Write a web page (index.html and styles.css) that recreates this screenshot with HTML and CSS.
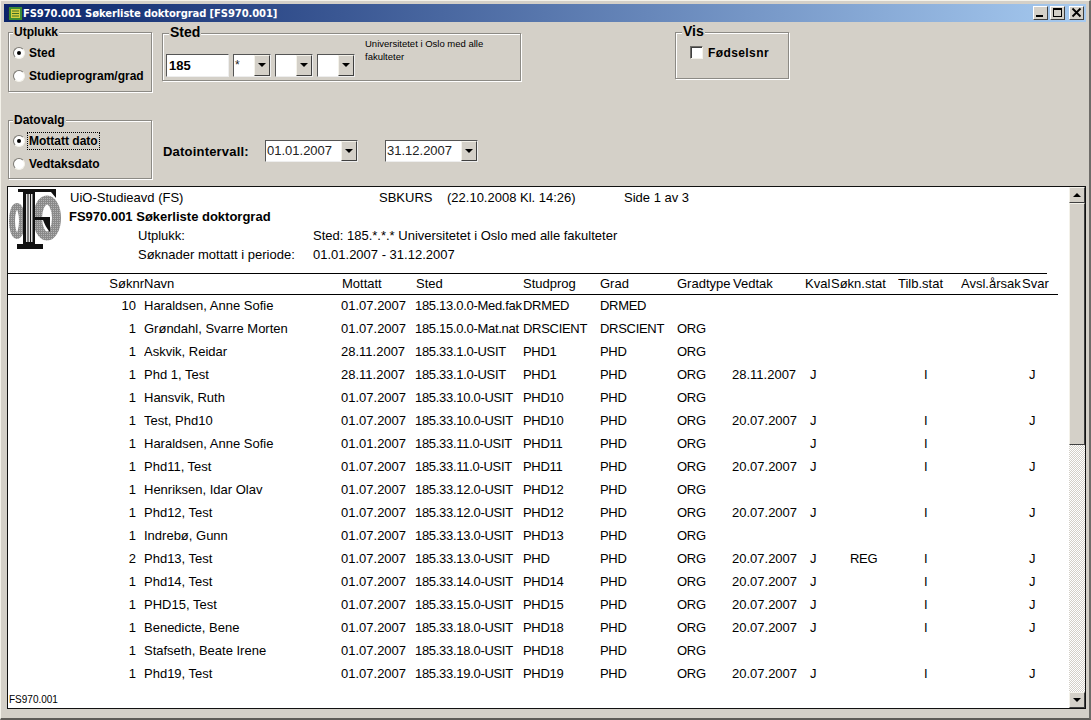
FILE: index.html
```html
<!DOCTYPE html>
<html lang="no">
<head>
  <meta charset="UTF-8" />
  <title>FS970.001 Søkerliste doktorgrad</title>
  <link rel="stylesheet" href="styles.css">
</head>
<body>
<div class="window">

  <!-- Title bar -->
  <div class="titlebar">
    <svg class="app-icon" width="15" height="15" viewBox="0 0 15 15">
      <rect x="1" y="1" width="13" height="13" fill="#3c8a34"/>
      <rect x="3" y="3" width="9" height="9" fill="#d6d03e"/>
      <path d="M4 5h7M4 7.500h7M4 10h7" stroke="#3f6e28" stroke-width="1"/>
      <path d="M0 3h1M0 6h1M0 9h1M0 12h1M14 3h1M14 6h1M14 9h1M14 12h1" stroke="#333"/>
    </svg>
    <span class="title-text">FS970.001 Søkerliste doktorgrad [FS970.001]</span>
    <div class="caption-buttons">
      <div class="cap-btn"><svg width="15" height="13" viewBox="0 0 15 13"><rect x="3" y="9" width="7" height="2" fill="#000"/></svg></div>
      <div class="cap-btn"><svg width="15" height="13" viewBox="0 0 15 13"><path d="M3 2h9v9H3z M4 4h7v6H4z" fill="#000" fill-rule="evenodd"/></svg></div>
      <div class="cap-btn cap-close"><svg width="15" height="13" viewBox="0 0 15 13"><path d="M3.500 2.500l8 8M11.500 2.500l-8 8" stroke="#000" stroke-width="1.800"/></svg></div>
    </div>
  </div>

  <!-- Selection form -->
  <div class="form">
    <div class="form-row form-row-top">
      <div class="group group-utplukk">
        <span class="group-title">Utplukk</span>
        <div class="option"><span class="radio checked"></span><span>Sted</span></div>
        <div class="option"><span class="radio"></span><span>Studieprogram/grad</span></div>
      </div>
      <div class="group group-sted">
        <span class="group-title title-big">Sted</span>
        <div class="sted-code">185</div>
        <div class="combo combo-small"><span class="combo-value">*</span><span class="combo-btn"></span></div>
        <div class="combo combo-small"><span class="combo-value"></span><span class="combo-btn"></span></div>
        <div class="combo combo-small"><span class="combo-value"></span><span class="combo-btn"></span></div>
        <div class="sted-name">Universitetet i Oslo med alle fakulteter</div>
      </div>
      <div class="group group-vis">
        <span class="group-title title-big">Vis</span>
        <div class="option"><span class="checkbox"></span><span class="wide">Fødselsnr</span></div>
      </div>
    </div>
    <div class="form-row form-row-bottom">
      <div class="group group-dato">
        <span class="group-title">Datovalg</span>
        <div class="option"><span class="radio checked"></span><span class="focused">Mottatt dato</span></div>
        <div class="option"><span class="radio"></span><span>Vedtaksdato</span></div>
      </div>
      <div class="date-range">
        <span class="date-label">Datointervall:</span>
        <div class="combo combo-date"><span class="combo-value">01.01.2007</span><span class="combo-btn"></span></div>
        <div class="combo combo-date"><span class="combo-value">31.12.2007</span><span class="combo-btn"></span></div>
      </div>
    </div>
  </div>

  <!-- Report preview -->
  <div class="report-frame">
    <div class="report">
      <div class="report-head">
        <svg class="logo" width="52" height="62" viewBox="0 0 52 62">
          <defs>
            <pattern id="speckle" width="2" height="2" patternUnits="userSpaceOnUse">
              <rect width="2" height="2" fill="#8a8a8a"/>
              <rect width="1" height="1" fill="#b4b4b4"/>
            </pattern>
          </defs>
          <g fill="none" stroke="url(#speckle)">
            <ellipse cx="8" cy="33" rx="5" ry="15" stroke-width="6"/>
            <ellipse cx="38" cy="30" rx="9.500" ry="18" stroke-width="9"/>
          </g>
          <path d="M9 1h38v9l-5-6H9z" fill="#111"/>
          <rect x="14" y="4" width="12" height="52" fill="#111"/>
          <path d="M17 6h1.500v48H17zM19.500 6H21v48h-1.500zM22 6h1.500v48H22z" fill="#e4e4e4"/>
          <rect x="8" y="56" width="26" height="5" fill="#111"/>
          <rect x="26" y="29" width="15" height="3" fill="#111"/>
          <path d="M34 32h7v12q-4-4-7-12z" fill="#111"/>
        </svg>
        <div class="head-lines">
          <div class="head-line">
            <span class="h-org">UiO-Studieavd (FS)</span>
            <span class="h-code">SBKURS</span>
            <span class="h-date">(22.10.2008 Kl. 14:26)</span>
            <span>Side 1 av 3</span>
          </div>
          <div class="head-line head-title">FS970.001 Søkerliste doktorgrad</div>
          <div class="head-line head-param"><span class="h-label">Utplukk:</span><span>Sted: 185.*.*.* Universitetet i Oslo med alle fakulteter</span></div>
          <div class="head-line head-param"><span class="h-label">Søknader mottatt i periode:</span><span>01.01.2007 - 31.12.2007</span></div>
        </div>
      </div>

      <table class="list">
        <colgroup>
          <col class="c-nr"><col class="c-navn"><col class="c-mottatt"><col class="c-sted"><col class="c-prog"><col class="c-grad"><col class="c-type"><col class="c-vedtak"><col class="c-kval"><col class="c-sokn"><col class="c-tilb"><col class="c-avsl"><col class="c-svar">
        </colgroup>
        <thead>
          <tr><th>Søknr</th><th>Navn</th><th>Mottatt</th><th>Sted</th><th>Studprog</th><th>Grad</th><th>Gradtype</th><th>Vedtak</th><th>Kval</th><th>Søkn.stat</th><th>Tilb.stat</th><th>Avsl.årsak</th><th>Svar</th></tr>
        </thead>
        <tbody>
          <tr><td>10</td><td>Haraldsen, Anne Sofie</td><td>01.07.2007</td><td>185.13.0.0-Med.fak</td><td>DRMED</td><td>DRMED</td><td></td><td></td><td></td><td></td><td></td><td></td><td></td></tr>
          <tr><td>1</td><td>Grøndahl, Svarre Morten</td><td>01.07.2007</td><td>185.15.0.0-Mat.nat</td><td>DRSCIENT</td><td>DRSCIENT</td><td>ORG</td><td></td><td></td><td></td><td></td><td></td><td></td></tr>
          <tr><td>1</td><td>Askvik, Reidar</td><td>28.11.2007</td><td>185.33.1.0-USIT</td><td>PHD1</td><td>PHD</td><td>ORG</td><td></td><td></td><td></td><td></td><td></td><td></td></tr>
          <tr><td>1</td><td>Phd 1, Test</td><td>28.11.2007</td><td>185.33.1.0-USIT</td><td>PHD1</td><td>PHD</td><td>ORG</td><td>28.11.2007</td><td>J</td><td></td><td>I</td><td></td><td>J</td></tr>
          <tr><td>1</td><td>Hansvik, Ruth</td><td>01.07.2007</td><td>185.33.10.0-USIT</td><td>PHD10</td><td>PHD</td><td>ORG</td><td></td><td></td><td></td><td></td><td></td><td></td></tr>
          <tr><td>1</td><td>Test, Phd10</td><td>01.07.2007</td><td>185.33.10.0-USIT</td><td>PHD10</td><td>PHD</td><td>ORG</td><td>20.07.2007</td><td>J</td><td></td><td>I</td><td></td><td>J</td></tr>
          <tr><td>1</td><td>Haraldsen, Anne Sofie</td><td>01.01.2007</td><td>185.33.11.0-USIT</td><td>PHD11</td><td>PHD</td><td>ORG</td><td></td><td>J</td><td></td><td>I</td><td></td><td></td></tr>
          <tr><td>1</td><td>Phd11, Test</td><td>01.07.2007</td><td>185.33.11.0-USIT</td><td>PHD11</td><td>PHD</td><td>ORG</td><td>20.07.2007</td><td>J</td><td></td><td>I</td><td></td><td>J</td></tr>
          <tr><td>1</td><td>Henriksen, Idar Olav</td><td>01.07.2007</td><td>185.33.12.0-USIT</td><td>PHD12</td><td>PHD</td><td>ORG</td><td></td><td></td><td></td><td></td><td></td><td></td></tr>
          <tr><td>1</td><td>Phd12, Test</td><td>01.07.2007</td><td>185.33.12.0-USIT</td><td>PHD12</td><td>PHD</td><td>ORG</td><td>20.07.2007</td><td>J</td><td></td><td>I</td><td></td><td>J</td></tr>
          <tr><td>1</td><td>Indrebø, Gunn</td><td>01.07.2007</td><td>185.33.13.0-USIT</td><td>PHD13</td><td>PHD</td><td>ORG</td><td></td><td></td><td></td><td></td><td></td><td></td></tr>
          <tr><td>2</td><td>Phd13, Test</td><td>01.07.2007</td><td>185.33.13.0-USIT</td><td>PHD</td><td>PHD</td><td>ORG</td><td>20.07.2007</td><td>J</td><td>REG</td><td>I</td><td></td><td>J</td></tr>
          <tr><td>1</td><td>Phd14, Test</td><td>01.07.2007</td><td>185.33.14.0-USIT</td><td>PHD14</td><td>PHD</td><td>ORG</td><td>20.07.2007</td><td>J</td><td></td><td>I</td><td></td><td>J</td></tr>
          <tr><td>1</td><td>PHD15, Test</td><td>01.07.2007</td><td>185.33.15.0-USIT</td><td>PHD15</td><td>PHD</td><td>ORG</td><td>20.07.2007</td><td>J</td><td></td><td>I</td><td></td><td>J</td></tr>
          <tr><td>1</td><td>Benedicte, Bene</td><td>01.07.2007</td><td>185.33.18.0-USIT</td><td>PHD18</td><td>PHD</td><td>ORG</td><td>20.07.2007</td><td>J</td><td></td><td>I</td><td></td><td>J</td></tr>
          <tr><td>1</td><td>Stafseth, Beate Irene</td><td>01.07.2007</td><td>185.33.18.0-USIT</td><td>PHD18</td><td>PHD</td><td>ORG</td><td></td><td></td><td></td><td></td><td></td><td></td></tr>
          <tr><td>1</td><td>Phd19, Test</td><td>01.07.2007</td><td>185.33.19.0-USIT</td><td>PHD19</td><td>PHD</td><td>ORG</td><td>20.07.2007</td><td>J</td><td></td><td>I</td><td></td><td>J</td></tr>
        </tbody>
      </table>
      <div class="report-foot">FS970.001</div>
    </div>

    <div class="scrollbar">
      <div class="scroll-btn"><span class="arrow-up"></span></div>
      <div class="scroll-thumb"></div>
      <div class="scroll-track"></div>
      <div class="scroll-btn"><span class="arrow-down"></span></div>
    </div>
  </div>
</div>
</body>
</html>
```

FILE: styles.css
```css
* {
  box-sizing: border-box;
  margin: 0;
  padding: 0;
}

body {
  width: 1091px;
  height: 720px;
  overflow: hidden;
  font-family: "Liberation Sans", Arial, sans-serif;
  background-color: #d4d0c8;
  color: #000;
}

.window {
  width: 1091px;
  height: 720px;
  padding: 3px 3px 2px 3px;
  border-right: 2px solid #6e6c68;
  border-bottom: 2px solid #5e5c58;
  border-top: 1px solid #f4f2ea;
  border-left: 1px solid #f4f2ea;
  display: flex;
  flex-direction: column;
}

/* Title bar */
.titlebar {
  height: 18px;
  flex: none;
  display: flex;
  align-items: center;
  padding-left: 4px;
  background: linear-gradient(to right, #0a246a, #a6caf0);
  color: #fff;
}

.app-icon {
  flex: none;
}

.title-text {
  font-family: "DejaVu Sans", sans-serif;
  font-size: 10px;
  font-weight: bold;
  letter-spacing: -0.1px;
}

.caption-buttons {
  margin-left: auto;
  margin-right: 2px;
  display: flex;
  gap: 2px;
}

.cap-btn {
  width: 15px;
  height: 14px;
  background-color: #d4d0c8;
  border: 1px solid;
  border-color: #fff #404040 #404040 #fff;
  overflow: hidden;
}

.cap-btn svg {
  display: block;
  margin: -1px 0 0 -1px;
}

.cap-close {
  margin-left: 2px;
}

/* Form area */
.form {
  height: 164px;
  flex: none;
  padding-left: 4px;
}

.form-row {
  display: flex;
  align-items: flex-start;
}

.form-row-top {
  height: 88px;
  padding-top: 10px;
}

.form-row-bottom {
  height: 76px;
  margin-top: 10px;
}

.group {
  position: relative;
  border: 1px solid #8c8a85;
  box-shadow: 1px 1px 0 #fff, inset 1px 1px 0 #fff;
}

.group-title {
  position: absolute;
  top: -8px;
  left: 4px;
  padding: 0 1px;
  background-color: #d4d0c8;
  font-size: 12px;
  font-weight: bold;
  line-height: 14px;
}

.title-big {
  top: -10px;
  left: 6px;
  font-size: 14px;
  line-height: 16px;
}

.group-utplukk,
.group-dato {
  width: 144px;
  height: 60px;
  padding: 8px 0 0 4px;
}

.group-dato {
  height: 59px;
}

.group-sted {
  width: 359px;
  height: 48px;
  margin: 1px 0 0 10px;
  padding: 20px 0 0 3px;
  display: flex;
  align-items: flex-start;
  gap: 4px;
}

.group-vis {
  width: 114px;
  height: 47px;
  margin-left: 154px;
  padding: 8px 0 0 14px;
}

.option {
  display: flex;
  align-items: center;
  height: 23px;
  font-size: 12px;
  font-weight: bold;
  white-space: nowrap;
}

.radio {
  position: relative;
  flex: none;
  width: 12px;
  height: 12px;
  margin-right: 4px;
  border-radius: 50%;
  background-color: #fff;
  border: 1px solid;
  border-color: #7a7872 #f4f2ea #f4f2ea #7a7872;
}

.radio.checked::after {
  content: "";
  position: absolute;
  left: 3px;
  top: 3px;
  width: 4px;
  height: 4px;
  border-radius: 50%;
  background-color: #000;
}

.focused {
  outline: 1px dotted #000;
  outline-offset: 1px;
  line-height: 14px;
}

.checkbox {
  flex: none;
  width: 13px;
  height: 13px;
  margin-right: 5px;
  background-color: #fff;
  border: 1px solid;
  border-color: #6e6c68 #f4f2ea #f4f2ea #6e6c68;
  box-shadow: inset 1px 1px 0 #404040;
}

.wide {
  letter-spacing: 0.4px;
}

.sted-code {
  width: 63px;
  height: 23px;
  background-color: #fff;
  border: 1px solid;
  border-color: #555 #eee #eee #555;
  font-size: 13px;
  font-weight: bold;
  line-height: 21px;
  padding-left: 2px;
}

.combo {
  display: flex;
  justify-content: space-between;
  align-items: stretch;
  background-color: #fff;
  border: 1px solid;
  border-color: #555 #eee #eee #555;
}

.combo-small {
  width: 38px;
  height: 23px;
  font-size: 12px;
}

.combo-date {
  width: 93px;
  height: 22px;
  font-size: 13px;
}

.combo-value {
  padding-left: 1px;
  line-height: 20px;
  white-space: nowrap;
  color: #222;
}

.combo-btn {
  position: relative;
  flex: none;
  width: 16px;
  background-color: #d4d0c8;
  border: 1px solid;
  border-color: #f4f2ea #404040 #404040 #f4f2ea;
}

.combo-btn::after {
  content: "";
  position: absolute;
  left: 3px;
  top: 7px;
  border-left: 4px solid transparent;
  border-right: 4px solid transparent;
  border-top: 4px solid #000;
}

.sted-name {
  width: 140px;
  margin: -17px 0 0 6px;
  font-size: 9.500px;
  line-height: 13px;
}

.date-range {
  display: flex;
  align-items: center;
  margin: 20px 0 0 11px;
}

.date-label {
  width: 102px;
  font-size: 13px;
  font-weight: bold;
  letter-spacing: 0.2px;
}

.combo-date + .combo-date {
  margin-left: 27px;
}

/* Report preview */
.report-frame {
  flex: none;
  height: 523px;
  margin-left: 3px;
  width: 1079px;
  display: flex;
  background-color: #fff;
  border: 1px solid #111;
}

.report {
  width: 1061px;
  font-size: 13px;
  overflow: hidden;
}

.report-head {
  display: flex;
  width: 1039px;
  height: 87px;
  border-bottom: 1px solid #000;
}

.logo {
  flex: none;
  display: block;
  margin: 1px 9px 0 1px;
}

.head-lines {
  padding-top: 1px;
  flex: 1;
}

.head-line {
  display: flex;
  height: 19px;
  line-height: 19px;
  white-space: nowrap;
}

.head-param {
  padding-left: 68px;
}

.h-org {
  width: 309px;
}

.h-code {
  width: 68px;
}

.h-date {
  width: 177px;
}

.head-title {
  font-weight: bold;
  margin-left: -1px;
}

.h-label {
  width: 175px;
}

.list {
  table-layout: fixed;
  border-collapse: collapse;
  width: 1050px;
}

.c-nr { width: 136px; }
.c-navn { width: 197px; }
.c-mottatt { width: 74px; }
.c-sted { width: 108px; }
.c-prog { width: 77px; }
.c-grad { width: 77px; }
.c-type { width: 55px; }
.c-vedtak { width: 73px; }
.c-kval { width: 26px; }
.c-sokn { width: 67px; }
.c-tilb { width: 63px; }
.c-avsl { width: 61px; }
.c-svar { width: 36px; }

.list thead tr {
  height: 20px;
  border-bottom: 1px solid #000;
}

.list th {
  font-weight: normal;
  text-align: left;
  white-space: nowrap;
  overflow: hidden;
}

.list th:first-child {
  text-align: right;
}

.list th:nth-child(3),
.list th:nth-child(4),
.list th:nth-child(8) {
  padding-left: 1px;
}

.list tbody tr {
  height: 23px;
}

.list td {
  white-space: nowrap;
  overflow: hidden;
  padding: 0;
}

.list td:first-child {
  text-align: right;
  padding-right: 8px;
}

/* capitals and codes run a little narrower in the original */
.list td:nth-child(4),
.list td:nth-child(5),
.list td:nth-child(6),
.list td:nth-child(7),
.list td:nth-child(10) {
  letter-spacing: -0.3px;
}

.list td:nth-child(9) { padding-left: 5px; }
.list td:nth-child(10) { padding-left: 19px; }
.list td:nth-child(11) { padding-left: 26px; }
.list td:nth-child(13) { padding-left: 7px; }

.report-foot {
  margin-top: 8px;
  padding-left: 1px;
  font-size: 10px;
  line-height: 14px;
}

/* Scrollbar */
.scrollbar {
  flex: none;
  width: 16px;
  display: flex;
  flex-direction: column;
}

.scroll-btn {
  flex: none;
  height: 16px;
  display: flex;
  align-items: center;
  justify-content: center;
  background-color: #d4d0c8;
  border: 1px solid;
  border-color: #f4f2ea #404040 #404040 #f4f2ea;
}

.scroll-thumb {
  flex: none;
  height: 242px;
  background-color: #d4d0c8;
  border: 1px solid;
  border-color: #f4f2ea #404040 #404040 #f4f2ea;
}

.scroll-track {
  flex: 1;
  background: repeating-conic-gradient(#d4d0c8 0 25%, #fff 0 50%) 0 0 / 2px 2px;
}

.arrow-up {
  border-left: 4px solid transparent;
  border-right: 4px solid transparent;
  border-bottom: 4px solid #000;
}

.arrow-down {
  border-left: 4px solid transparent;
  border-right: 4px solid transparent;
  border-top: 4px solid #000;
}
```
